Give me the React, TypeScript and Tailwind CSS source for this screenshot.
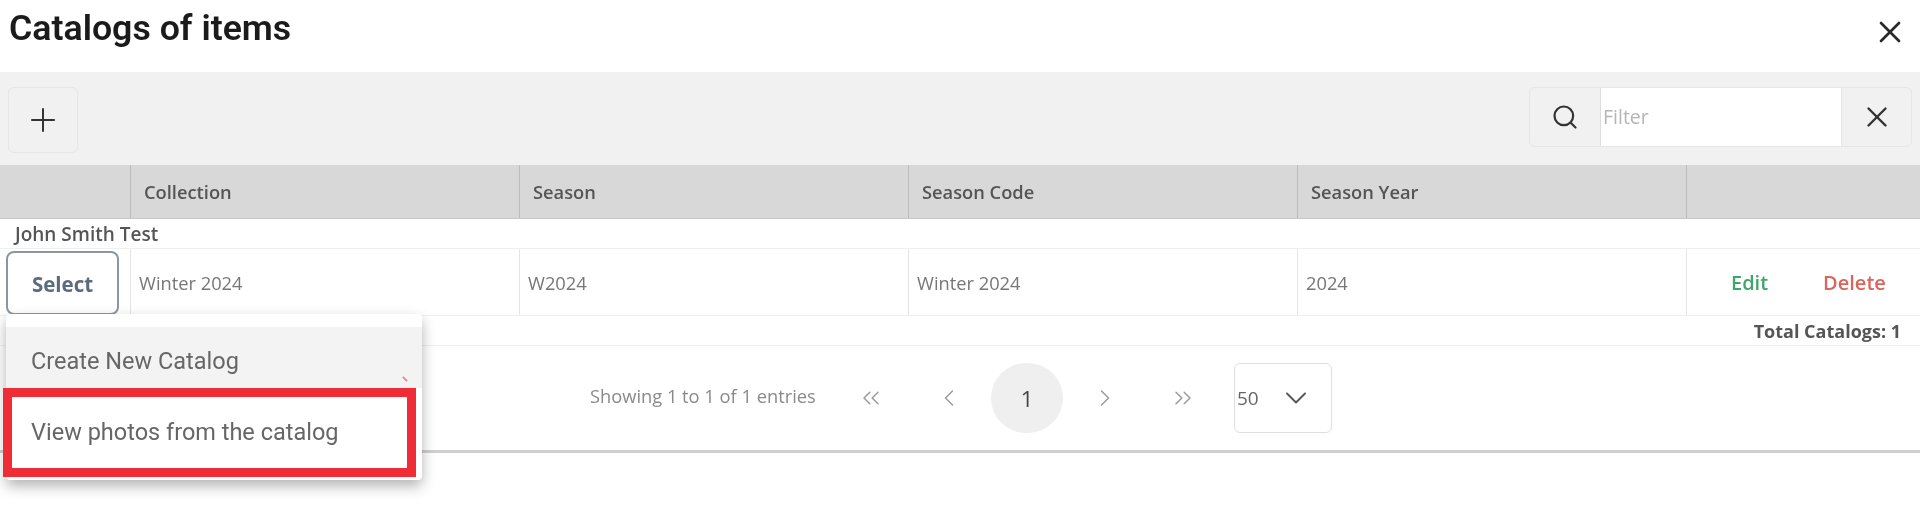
import React from "react";
import { ChevronDown, ChevronLeft, ChevronRight, ChevronsLeft, ChevronsRight, Plus, Search, X } from "lucide-react";

const columns = ["Collection", "Season", "Season Code", "Season Year"];
const row = ["Winter 2024", "W2024", "Winter 2024", "2024"];

function PageButton({ children }: { children: React.ReactNode }) {
  return <button className="flex h-[70px] w-[72px] items-center justify-center text-[#9a9a9a]">{children}</button>;
}

export default function App() {
  return (
    <div className="relative h-[518px] w-[1920px] overflow-hidden bg-white font-['Open_Sans',sans-serif] blur-[0.5px]">
      {/* title */}
      <div className="flex h-[72px] items-start justify-between pl-[9px] pr-[12px]">
        <h1 className="mt-[6px] font-['Roboto',sans-serif] text-[35.7px] font-semibold leading-[44px] text-[#1b1b1b]">Catalogs of items</h1>
        <button className="mt-[14px] text-[#2a2a2a]">
          <X size={36} strokeWidth={1.8} />
        </button>
      </div>

      {/* toolbar */}
      <div className="flex h-[93px] items-start justify-between bg-[#f1f1f1] pl-[8px] pr-[8px] pt-[15px]">
        <button className="flex h-[66px] w-[70px] items-center justify-center rounded-[6px] border border-[#e6e6e6] text-[#333]">
          <Plus size={38} strokeWidth={1.25} />
        </button>
        <div className="flex h-[60px] w-[383px] overflow-hidden rounded-[6px] border border-[#e6e6e6]">
          <div className="flex w-[71px] items-center justify-center border-r border-[#dcdcdc] text-[#333]">
            <Search size={28} strokeWidth={1.9} />
          </div>
          <div className="flex w-[240px] items-center bg-white pl-[2px] text-[19.5px] text-[#b5b5b5]">Filter</div>
          <div className="flex flex-1 items-center justify-center border-l border-[#e6e6e6] text-[#333]">
            <X size={34} strokeWidth={1.7} />
          </div>
        </div>
      </div>

      {/* table head */}
      <div className="grid h-[54px] grid-cols-[130px_repeat(4,389px)_1fr] border-b border-[#c9c9c9] bg-[#d8d8d8]">
        <div />
        {columns.map((c) => (
          <div key={c} className="flex items-center border-l border-[#bdbdbd] pl-[13px] text-[18.3px] font-semibold text-[#555]">
            {c}
          </div>
        ))}
        <div className="border-l border-[#bdbdbd]" />
      </div>

      {/* group */}
      <div className="flex h-[30px] items-center border-b border-[#efefef] pl-[15px] pt-[1px] text-[19px] font-semibold text-[#555]">
        John Smith Test
      </div>

      {/* row */}
      <div className="grid h-[67px] grid-cols-[130px_repeat(4,389px)_1fr] border-b border-[#efefef]">
        <div className="pl-[6px] pt-[2px]">
          <button className="flex h-[64px] w-[113px] items-center justify-center rounded-[8px] border-2 border-[#8c96a3] pt-[2px] text-[20.5px] font-bold text-[#5d6b7e]">
            Select
          </button>
        </div>
        {row.map((c, i) => (
          <div key={i} className="flex items-center border-l border-[#e4e4e4] pl-[8px] pt-[2px] text-[18.3px] text-[#777]">
            {c}
          </div>
        ))}
        <div className="flex items-center border-l border-[#e4e4e4] pl-[44px] pt-[1px] text-[20px] font-semibold">
          <span className="text-[#3fa66b]">Edit</span>
          <span className="ml-[55px] text-[#d9655c]">Delete</span>
        </div>
      </div>

      {/* total */}
      <div className="flex h-[30px] items-center justify-end border-b border-[#efefef] pr-[19px] pt-[1px] text-[18px] font-bold text-[#555]">
        Total Catalogs: 1
      </div>

      {/* pagination */}
      <div className="flex h-[107px] items-start border-b-[3px] border-[#cfcfcf] pl-[590px] pt-[17px]">
        <span className="mt-[21px] w-[245px] text-[18.3px] leading-[24px] text-[#8a8a8a]">Showing 1 to 1 of 1 entries</span>
        <div className="flex items-center gap-[6px]">
          <PageButton><ChevronsLeft size={28} strokeWidth={1.25} /></PageButton>
          <PageButton><ChevronLeft size={28} strokeWidth={1.25} /></PageButton>
          <div className="flex h-[70px] w-[72px] items-center justify-center rounded-full bg-[#efefef] text-[22px] text-[#444]">1</div>
          <PageButton><ChevronRight size={28} strokeWidth={1.25} /></PageButton>
          <PageButton><ChevronsRight size={28} strokeWidth={1.25} /></PageButton>
        </div>
        <div className="ml-[15px] flex h-[70px] w-[98px] items-center rounded-[6px] border border-[#dfdfdf] pl-[2px] text-[19px] text-[#666]">
          50
          <ChevronDown size={36} strokeWidth={1.25} className="ml-[19px] text-[#555]" />
        </div>
      </div>

      {/* dropdown menu */}
      <div className="absolute left-[6px] top-[314px] h-[166px] w-[416px] rounded-[4px] bg-white pt-[13px] shadow-[0_6px_14px_rgba(0,0,0,0.3)]">
        <div className="relative flex h-[61px] items-center bg-[#f3f3f3] pl-[25px] pt-[8px] font-['Roboto',sans-serif] text-[23.5px] text-[#666]">
          Create New Catalog
          <span className="absolute right-[16px] top-[49px] h-[6px] w-[2px] -rotate-45 bg-[#e58a90]" />
        </div>
        <div className="ml-[-3px] flex h-[89px] w-[413px] items-center border-[9px] border-[#ee2d36] bg-white pl-[19px] font-['Roboto',sans-serif] text-[23.5px] text-[#666]">
          View photos from the catalog
        </div>
      </div>
    </div>
  );
}
